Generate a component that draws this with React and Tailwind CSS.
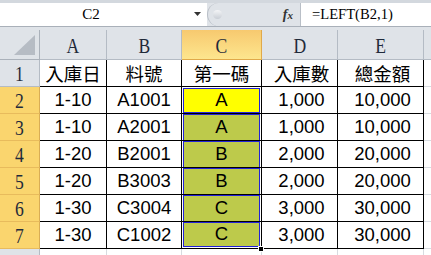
import React from "react";

const cols = ["A", "B", "C", "D", "E"];

const rows = [
  ["入庫日", "料號", "第一碼", "入庫數", "總金額"],
  ["1-10", "A1001", "A", "1,000", "10,000"],
  ["1-10", "A2001", "A", "1,000", "10,000"],
  ["1-20", "B2001", "B", "2,000", "20,000"],
  ["1-20", "B3003", "B", "2,000", "20,000"],
  ["1-30", "C3004", "C", "3,000", "30,000"],
  ["1-30", "C1002", "C", "3,000", "30,000"],
];

const serif = "font-['Liberation_Serif',serif]";

const HeadLetter = ({ children }) => (
  <span className={`inline-block scale-x-[0.8] text-[22px] leading-none text-[#1f2a3a] ${serif}`}>
    {children}
  </span>
);

const FormulaBar = () => (
  <div className="h-[30px] bg-[#dfe3e8] flex flex-col">
    <div className="h-[3px] bg-[#d3d8de]" />
    <div className="h-[23px] flex">
      {/* Name box */}
      <div className="w-[207px] bg-white flex items-center">
        <div className={`w-[182px] text-center text-[15px] leading-none text-black ${serif}`}>C2</div>
        <svg width="8" height="5" viewBox="0 0 8 5" className="ml-[12px]">
          <path d="M0 0 H7 L3.5 4 Z" fill="#333" />
        </svg>
      </div>
      {/* Grip + fx */}
      <div className="w-[93px] bg-[#dfe3e8] flex items-center rounded-l-[12px] border-l border-[#b9bfc7]">
        <div className="w-[9px] h-[9px] ml-[5px] rounded-full bg-gradient-to-b from-[#f4f5f7] to-[#c9ced5]" />
        <span className={`ml-auto mr-[7px] italic font-bold text-[14px] leading-none text-[#333] ${serif}`}>
          f<span className="text-[11px]">x</span>
        </span>
      </div>
      {/* Formula */}
      <div className="flex-1 bg-white border-l border-[#b9bfc7] flex items-center pl-[11px]">
        <span className={`text-[14.6px] leading-none text-black ${serif}`}>=LEFT(B2,1)</span>
      </div>
    </div>
    <div className="h-px bg-[#a9b0b9]" />
  </div>
);

const App = () => {
  return (
    <div className="w-[431px] h-[255px] overflow-hidden bg-white relative">
      <FormulaBar />
      <div className="grid grid-cols-[40px_67px_75px_80px_76px_86px_1fr] grid-rows-[30px_repeat(7,27px)_1fr] h-[225px]">
        {/* Corner */}
        <div className="bg-[#dfe3e8] border-r border-b border-[#aab1ba] relative">
          <svg width="22" height="21" viewBox="0 0 22 21" className="absolute left-[14px] top-[5px]">
            <path d="M21 0 V20 H0 Z" fill="#b6bcc4" />
          </svg>
        </div>
        {cols.map((c) => (
          <div
            key={c}
            className={
              c === "C"
                ? "bg-gradient-to-b from-[#f7c96f] to-[#fde68e] border-r border-b border-[#e0a94a] flex items-center justify-center pt-[3px]"
                : "bg-[#dfe3e8] border-r border-b border-[#b4bbc4] flex items-center justify-center pt-[3px]"
            }
          >
            <HeadLetter>{c}</HeadLetter>
          </div>
        ))}
        <div className="bg-[#dfe3e8] border-b border-[#b4bbc4]" />

        {rows.map((r, ri) => (
          <React.Fragment key={ri}>
            <div
              className={
                ri === 0
                  ? "bg-[#dfe3e8] border-r border-b border-[#b4bbc4] flex items-center justify-center pt-[2px]"
                  : "bg-[#fad56e] border-r border-b border-r-[#d9ad55] border-b-[#e8bb5c] flex items-center justify-center pt-[2px]"
              }
            >
              <HeadLetter>{ri + 1}</HeadLetter>
            </div>
            {r.map((v, ci) => {
              const isC = ci === 2 && ri > 0;
              const font =
                ri === 0
                  ? "font-['Noto_Sans_CJK_TC',sans-serif] text-[18.5px]"
                  : "font-['Liberation_Sans',sans-serif] text-[18.5px]";
              if (isC) {
                return (
                  <div
                    key={ci}
                    className={`border-r border-b border-black bg-white px-px ${ri === 1 ? "pt-px" : ""} ${
                      ri === 6 ? "pb-px" : ""
                    }`}
                  >
                    <div
                      className={`h-full border-x border-t border-[#2323d8] flex items-center justify-center leading-none text-black ${font} ${
                        ri === 1 ? "bg-[#ffff00] border-b" : "bg-[#bdca4b]"
                      } ${ri === 6 ? "border-b" : ""}`}
                    >
                      {v}
                    </div>
                  </div>
                );
              }
              return (
                <div
                  key={ci}
                  className={`border-r border-b border-black flex items-center justify-center leading-none text-black ${font} ${
                    ci >= 3 ? "pl-[4px]" : ""
                  }`}
                >
                  {v}
                </div>
              );
            })}
            <div className="border-b border-[#d7dbe0]" />
          </React.Fragment>
        ))}

        {/* Bottom partial row */}
        <div className="bg-[#dfe3e8] border-r border-[#b4bbc4]" />
        {cols.map((c) => (
          <div key={c} className="border-r border-[#d7dbe0]" />
        ))}
        <div />
      </div>
      {/* Fill handle */}
      <div className="absolute left-[258px] top-[246px] w-[6px] h-[6px] bg-black border border-white" />
    </div>
  );
};

export default App;
